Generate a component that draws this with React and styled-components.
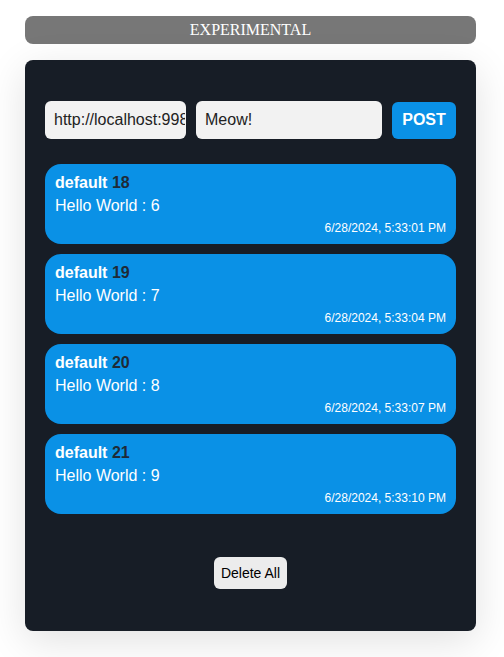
import React, { useState } from "react";
import styled, { createGlobalStyle } from "styled-components";

const GlobalStyle = createGlobalStyle`
  body {
    margin: 0;
    background: #ffffff;
    font-family: "Liberation Sans", Arial, sans-serif;
  }
`;

const messages = [
  { id: 18, text: "Hello World : 6", date: "6/28/2024, 5:33:01 PM" },
  { id: 19, text: "Hello World : 7", date: "6/28/2024, 5:33:04 PM" },
  { id: 20, text: "Hello World : 8", date: "6/28/2024, 5:33:07 PM" },
  { id: 21, text: "Hello World : 9", date: "6/28/2024, 5:33:10 PM" },
];

const App = () => {
  const [url, setUrl] = useState("http://localhost:9989");
  const [msg, setMsg] = useState("Meow!");

  return (
    <Page>
      <GlobalStyle />
      <Banner>EXPERIMENTAL</Banner>
      <Panel>
        <Form>
          <UrlInput value={url} onChange={(e) => setUrl(e.target.value)} />
          <MsgInput value={msg} onChange={(e) => setMsg(e.target.value)} />
          <PostButton>POST</PostButton>
        </Form>
        <List>
          {messages.map((m) => (
            <Bubble key={m.id}>
              <Author>
                default <Num>{m.id}</Num>
              </Author>
              <Body>{m.text}</Body>
              <Stamp>{m.date}</Stamp>
            </Bubble>
          ))}
        </List>
        <Footer>
          <DeleteButton>Delete All</DeleteButton>
        </Footer>
      </Panel>
    </Page>
  );
};

export default App;

const Page = styled.div`
  width: 451px;
  margin-left: 25px;
  padding: 16px 0 27px;
  display: flex;
  flex-direction: column;
  gap: 16px;
`;

const Banner = styled.div`
  height: 28px;
  background: #777777;
  border-radius: 8px;
  color: #ffffff;
  font-family: "Liberation Serif", "Times New Roman", serif;
  font-size: 16px;
  line-height: 28px;
  text-align: center;
`;

const Panel = styled.div`
  background: #171d26;
  border-radius: 8px;
  padding: 41px 20px 41px;
  box-shadow: 0 10px 40px rgba(0, 0, 0, 0.12);
  display: flex;
  flex-direction: column;
`;

const Form = styled.div`
  display: flex;
  align-items: center;
  gap: 10px;
`;

const Field = styled.input`
  box-sizing: border-box;
  height: 38px;
  border: none;
  border-radius: 6px;
  background: #f2f2f2;
  color: #222;
  font-family: "Liberation Sans", Arial, sans-serif;
  font-size: 16px;
  padding: 0 1px 0 9px;
  outline: none;
`;

const UrlInput = styled(Field)`
  width: 141px;
`;

const MsgInput = styled(Field)`
  width: 186px;
`;

const PostButton = styled.button`
  box-sizing: border-box;
  width: 64px;
  height: 37px;
  border: none;
  border-radius: 6px;
  background: #0a91e6;
  color: #ffffff;
  font-family: "Liberation Sans", Arial, sans-serif;
  font-weight: bold;
  font-size: 16px;
`;

const List = styled.div`
  margin-top: 25px;
  display: flex;
  flex-direction: column;
  gap: 10px;
`;

const Bubble = styled.div`
  box-sizing: border-box;
  height: 80px;
  background: #0a91e6;
  border-radius: 16px;
  padding: 10px 10px 0;
  color: #ffffff;
  display: flex;
  flex-direction: column;
`;

const Author = styled.div`
  font-weight: bold;
  font-size: 16px;
  line-height: 17px;
`;

const Num = styled.span`
  color: #1f2a36;
`;

const Body = styled.div`
  font-size: 16px;
  line-height: 18px;
  margin-top: 6px;
`;

const Stamp = styled.div`
  font-size: 12px;
  line-height: 14px;
  text-align: right;
  margin-top: 6px;
`;

const Footer = styled.div`
  margin-top: 43px;
  display: flex;
  justify-content: center;
`;

const DeleteButton = styled.button`
  box-sizing: border-box;
  height: 32px;
  width: 73px;
  border: none;
  border-radius: 6px;
  background: #ececec;
  color: #000;
  font-family: "Liberation Sans", Arial, sans-serif;
  font-size: 14px;
  padding: 0;
  margin-bottom: 1px;
`;
